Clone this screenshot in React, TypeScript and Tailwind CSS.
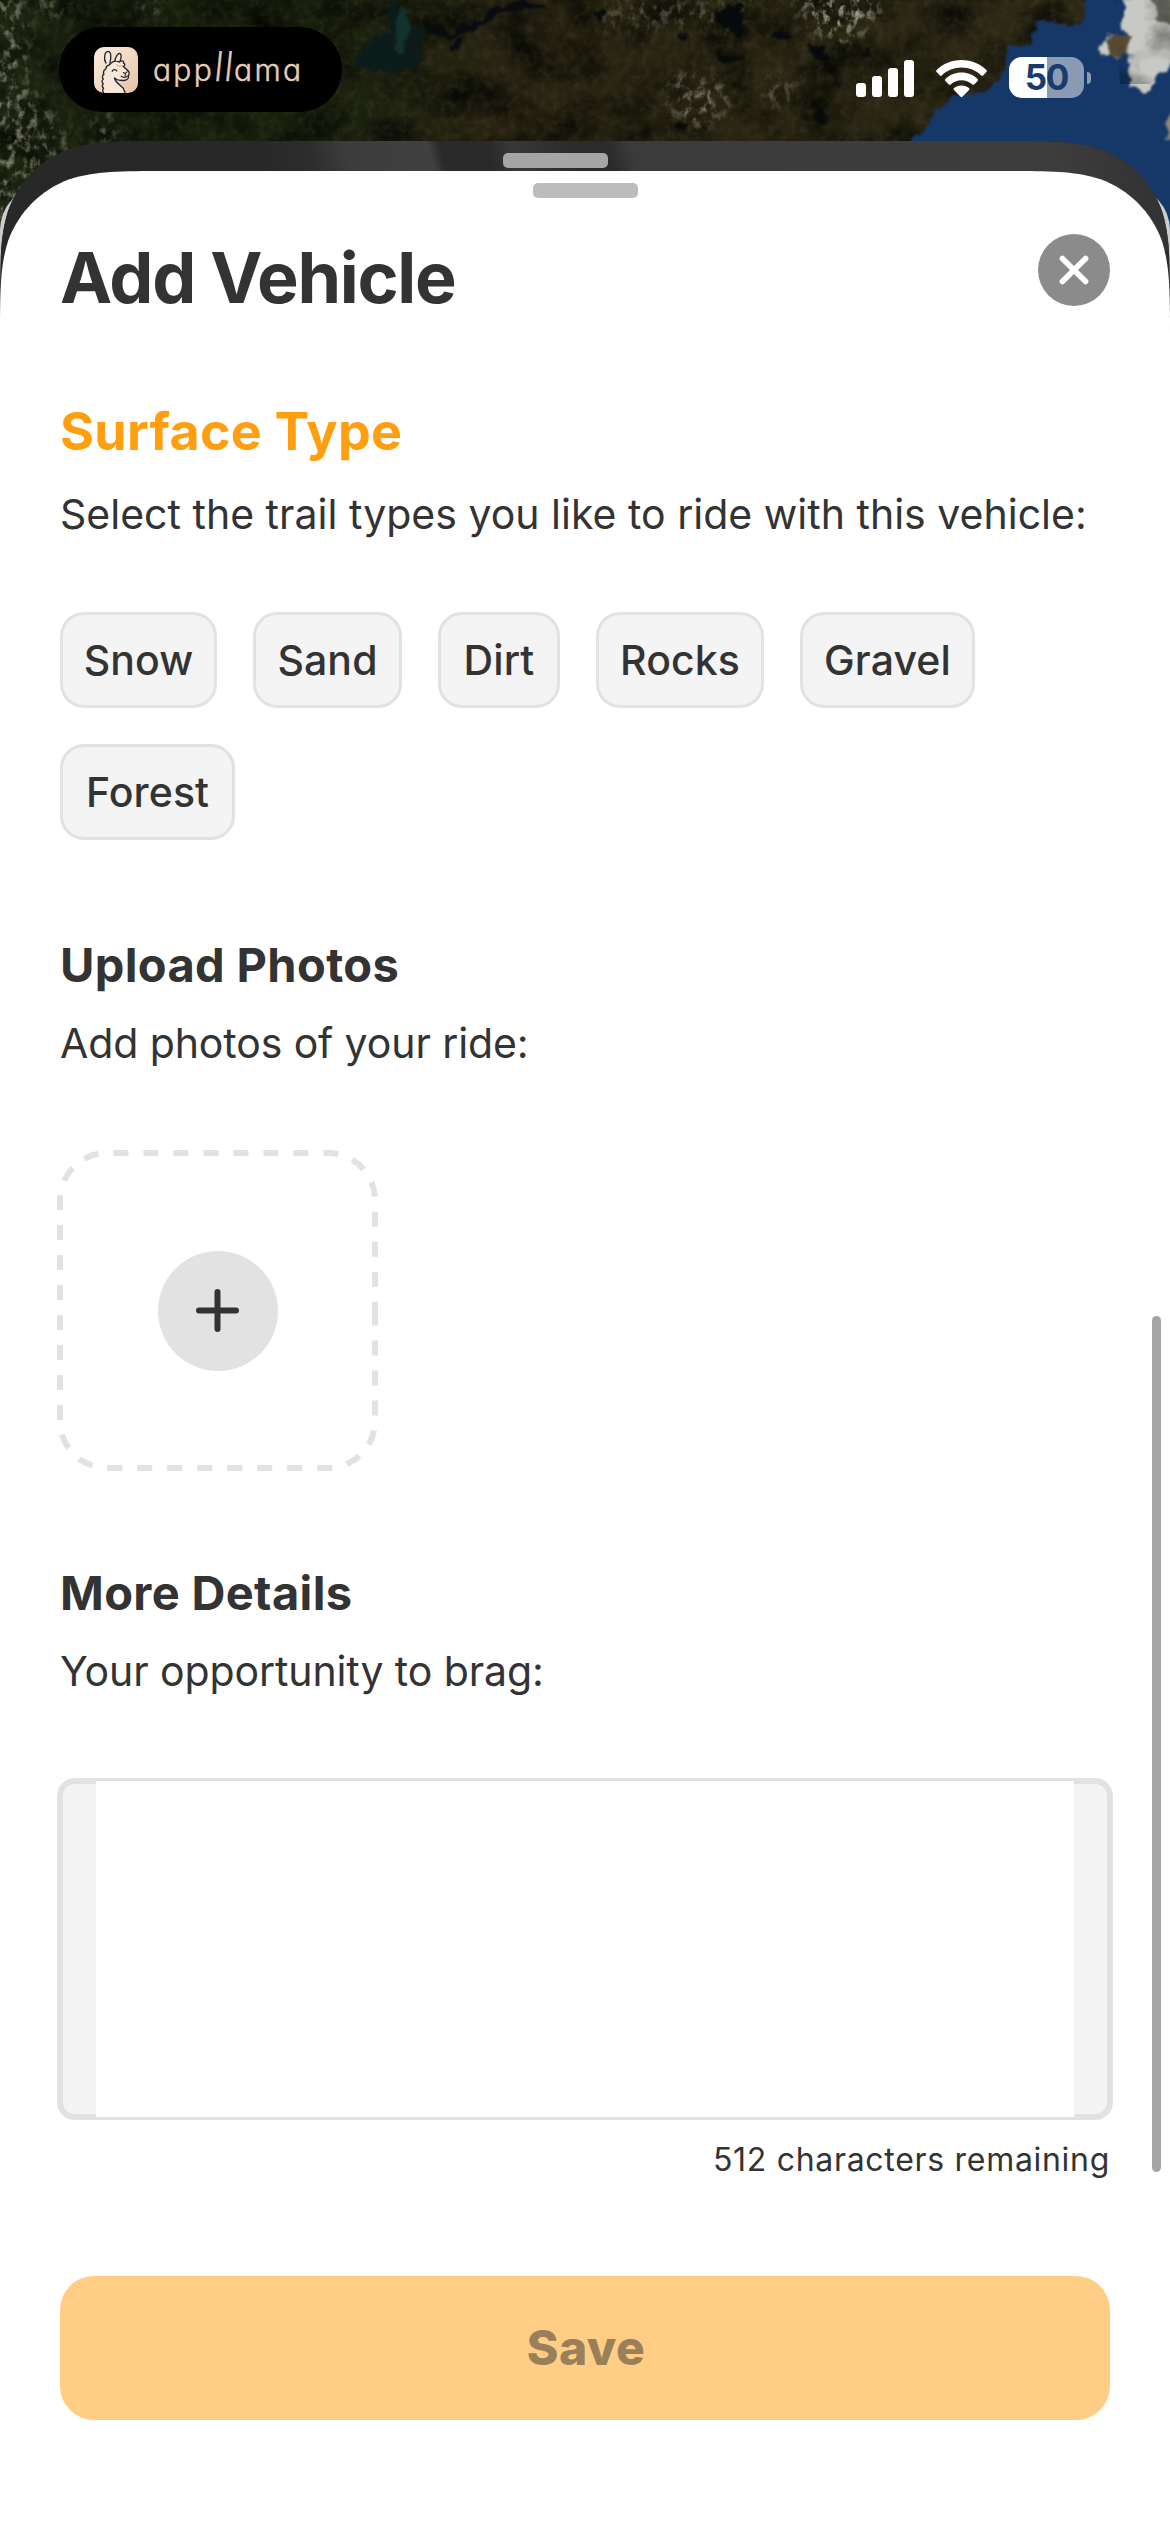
import type { ReactNode } from 'react';

const surfaces = [
  { name: 'Snow', width: 'w-[157px]' },
  { name: 'Sand', width: 'w-[149px]' },
  { name: 'Dirt', width: 'w-[122px]' },
  { name: 'Rocks', width: 'w-[168px]' },
  { name: 'Gravel', width: 'w-[175px]' },
  { name: 'Forest', width: 'w-[175px]' },
];

/* Satellite map strip that stays visible above the sheets. */
function SatelliteMap() {
  return (
    <svg className="absolute left-0 top-0 h-[300px] w-[1170px]" viewBox="0 0 1170 300" aria-hidden="true">
      <defs>
        <linearGradient id="land" x1="0" x2="1" y1="0" y2="0.05">
          <stop offset="0" stopColor="#1b2210" />
          <stop offset="0.16" stopColor="#141e0b" />
          <stop offset="0.33" stopColor="#1b210e" />
          <stop offset="0.45" stopColor="#292312" />
          <stop offset="0.6" stopColor="#272311" />
          <stop offset="1" stopColor="#2e2a17" />
        </linearGradient>
        <filter id="mottle" x="0" y="0" width="100%" height="100%" colorInterpolationFilters="sRGB">
          <feTurbulence type="fractalNoise" baseFrequency="0.02 0.025" numOctaves="6" seed="7" />
          <feColorMatrix values="0 0 0 0 0.02  0 0 0 0 0.03  0 0 0 0 0.01  0 2 0 0 -0.78" />
        </filter>
        <filter id="grain" x="0" y="0" width="100%" height="100%" colorInterpolationFilters="sRGB">
          <feTurbulence type="fractalNoise" baseFrequency="0.12" numOctaves="4" seed="3" />
          <feColorMatrix values="0 0 0 0 0.34  0 0 0 0 0.31  0 0 0 0 0.2  0 0 1.6 0 -0.66" />
        </filter>
        <filter id="snow" x="0" y="0" width="100%" height="100%" colorInterpolationFilters="sRGB">
          <feTurbulence type="fractalNoise" baseFrequency="0.13 0.1" numOctaves="4" seed="12" />
          <feColorMatrix values="0 0 0 0 0.62  0 0 0 0 0.63  0 0 0 0 0.56  3.6 0 0 0 -1.75" />
        </filter>
        <filter id="rough" x="-10%" y="-10%" width="120%" height="120%" colorInterpolationFilters="sRGB">
          <feTurbulence type="fractalNoise" baseFrequency="0.07" numOctaves="3" seed="4" result="n" />
          <feDisplacementMap in="SourceGraphic" in2="n" scale="14" xChannelSelector="R" yChannelSelector="G" />
          <feGaussianBlur stdDeviation="1.3" />
        </filter>
        <filter id="lakes" x="-10%" y="-50%" width="120%" height="200%" colorInterpolationFilters="sRGB">
          <feTurbulence type="fractalNoise" baseFrequency="0.1" numOctaves="3" seed="9" result="n" />
          <feDisplacementMap in="SourceGraphic" in2="n" scale="12" xChannelSelector="R" yChannelSelector="G" />
          <feGaussianBlur stdDeviation="1" />
        </filter>
        <filter id="soft">
          <feGaussianBlur stdDeviation="9" />
        </filter>
        <mask id="snowMask">
          <g filter="url(#soft)" fill="#fff">
            <path d="M-20 -10H22L30 90L70 140L55 170L40 250H-20Z" fill="#aaa" />
            <path d="M30 -10H75L70 12L45 20Z" fill="#888" />
            <path d="M94 108L114 118L114 145L94 142Z" fill="#aaa" />
            <path d="M140 -10H160V18H142Z" fill="#999" />
            <path d="M600 0H760L740 30L700 25L640 30L600 30Z" fill="#666" />
            <path d="M795 -10H875L877 22L840 45L807 22Z" />
            <path d="M670 75L725 80L730 110L690 130L665 100Z" fill="#aaa" />
            <path d="M770 80L798 82L790 102H762Z" fill="#aaa" />
          </g>
        </mask>
        <clipPath id="island">
          <path d="M1114 -4H1180V60L1150 84L1120 84Z" />
        </clipPath>
      </defs>
      <rect width="1170" height="300" fill="url(#land)" />
      <rect width="1170" height="300" filter="url(#mottle)" />
      <rect width="1170" height="300" filter="url(#grain)" opacity="0.35" />
      <g filter="url(#rough)">
        <path d="M388 -4L404 14L424 30L420 56L414 70L384 72L356 68L358 56L372 40L390 34Z" fill="#0c1c1b" />
        <path d="M400 4L410 20L404 52L394 50Z" fill="#12332b" />
        <path d="M432 30L452 34L476 26L498 10L522 4L546 6" fill="none" stroke="#080b10" strokeWidth="6" />
        <path d="M450 50L462 38" stroke="#080b10" strokeWidth="5" />
      </g>
      <rect width="1170" height="300" filter="url(#snow)" mask="url(#snowMask)" />
      <g filter="url(#lakes)" fill="#070a0d">
        <path d="M716 14L728 4L742 4L744 24L738 40L730 28L718 24Z" />
        <path d="M772 38L784 26L792 38Z" />
        <path d="M806 44L826 44L828 64L814 58Z" />
        <path d="M716 50L726 56L742 56L738 62L718 62Z" />
        <path d="M681 34L686 41M818 104L821 124M868 48L864 56M676 128L684 122M598 12L602 20" stroke="#070a0d" strokeWidth="7" />
      </g>
      <g filter="url(#rough)">
        <path d="M1090 -10L1082 26L1036 22L1028 46L1006 48L1004 72L996 86L954 94L932 118L910 142V310H1190V-10Z" fill="#163869" />
        <path d="M1122 -10L1122 26L1130 42L1106 36L1098 54L1116 56L1128 50L1130 88L1142 90L1160 74L1180 60V-10Z" fill="#c8c9c5" />
        <path d="M1106 38L1130 36L1128 52L1110 56Z" fill="#574a33" />
        <path d="M1152 -6L1180 -4L1180 24L1160 20Z" fill="#6a6b60" />
        <path d="M1168 116L1180 110V146L1166 136Z" fill="#8b8a7c" />
      </g>
      <g clipPath="url(#island)">
        <rect width="1170" height="300" filter="url(#mottle)" opacity="0.45" />
      </g>
    </svg>
  );
}

function LlamaIcon() {
  return (
    <svg className="h-[46px] w-[44px]" viewBox="161 108 133 137" preserveAspectRatio="none" aria-hidden="true">
      <defs>
        <linearGradient id="tile" x1="0" x2="1" y1="0" y2="1">
          <stop offset="0" stopColor="#fbeee2" />
          <stop offset="1" stopColor="#e6c3a5" />
        </linearGradient>
      </defs>
      <rect x="161" y="108" width="133" height="137" rx="30" fill="url(#tile)" />
      <g stroke="#20242b" strokeWidth="4" strokeLinecap="round" strokeLinejoin="round">
        <path
          d="M190 244C186 238 187 234 190 231C185 226 185 221 189 218C184 213 184 207 189 204C185 198 186 192 191 189C188 182 191 176 197 173C197 167 201 163 206 162L212 157C218 149 232 148 238 153C244 146 252 150 250 156C256 158 255 164 249 166C255 171 266 178 267 184C268 190 264 194 265 198C265 206 254 209 245 207C237 208 229 206 223 200C224 213 240 221 249 230L255 244"
          fill="#f8e7d8"
        />
        <path d="M197 156C189 142 193 122 204 121C214 122 213 142 209 156" fill="#f8e7d8" />
        <path d="M224 149C226 137 233 127 239 127C244 130 243 141 240 149" fill="#f8e7d8" />
        <path d="M216 180C219 174 227 174 230 179" fill="none" />
        <path d="M250 184C254 188 259 186 261 182M256 188L255 194M243 195C248 200 258 200 262 194" fill="none" strokeWidth="3.4" />
      </g>
      <path d="M228 161C234 166 244 166 249 163" fill="none" stroke="#dfb48d" strokeWidth="4" />
    </svg>
  );
}

function StatusBar() {
  return (
    <header className="relative flex h-[141px] items-start justify-between pl-[59px] pr-[79px] pt-[27px]">
      <div className="flex h-[85px] w-[283px] items-center rounded-full bg-black pl-[35px]">
        <LlamaIcon />
        <div className="ml-[15px] whitespace-nowrap text-[30px] font-light leading-[46px] tracking-[2.3px] text-[#e3cdbb] [-webkit-text-stroke:0.5px_#e3cdbb] [font-feature-settings:'cv11']">
          app
          <span className="inline-block tracking-[3px] [transform-origin:50%_73%] [transform:skewX(-6deg)_scaleY(1.36)]">ll</span>
          ama
        </div>
      </div>
      <div className="flex items-center pt-[30px]">
        <div className="mt-[2px] flex h-[37px] items-end gap-[6px]">
          <i className="h-[14px] w-[10px] rounded-[3px] bg-white" />
          <i className="h-[21px] w-[10px] rounded-[3px] bg-white" />
          <i className="h-[29px] w-[10px] rounded-[3px] bg-white" />
          <i className="h-[37px] w-[10px] rounded-[3px] bg-white" />
        </div>
        <svg className="ml-[22px] mt-[2px] h-[38px] w-[51px]" viewBox="0 0 51 38" fill="#fff" aria-hidden="true">
          <path d="M25.5 0C35.2 0 44 3.8 50.4 10C51 10.6 51 11.4 50.4 12L47.1 15.4C46.6 15.9 45.8 15.9 45.2 15.4C40 10.5 33.1 7.6 25.5 7.6S11 10.5 5.8 15.4C5.2 15.9 4.4 15.9 3.9 15.4L.6 12C0 11.4 0 10.6.6 10C7 3.8 15.8 0 25.5 0Z" />
          <path d="M25.5 12.6C31.8 12.6 37.4 15 41.6 19C42.2 19.6 42.2 20.4 41.6 21L38.2 24.4C37.6 25 36.9 25 36.3 24.5C33.5 21.8 29.7 20.2 25.5 20.2S17.5 21.8 14.7 24.5C14.1 25 13.4 25 12.8 24.4L9.4 21C8.8 20.4 8.8 19.6 9.4 19C13.6 15 19.2 12.6 25.5 12.6Z" />
          <path d="M25.5 25.4C28.4 25.4 31 26.4 33 28.1C33.6 28.7 33.6 29.4 33 30L26.6 36.6C26 37.3 25 37.3 24.4 36.6L18 30C17.4 29.4 17.4 28.7 18 28.1C20 26.4 22.6 25.4 25.5 25.4Z" />
        </svg>
        <div className="ml-[22px] flex h-[41px] w-[75px] items-center justify-center rounded-[13px] bg-[linear-gradient(90deg,#fff_0_38px,#8b9bb4_38px)] text-[35px] font-bold leading-[41px] tracking-[-1.2px] text-[#1a3b6d]">
          50
        </div>
        <i className="ml-[3px] h-[12px] w-[4px] rounded-r-full bg-[#8b9bb4]" />
      </div>
    </header>
  );
}

function Title({ children }: { children: ReactNode }) {
  return <h2 className="text-[47px] font-bold leading-[56px] tracking-[0.35px]">{children}</h2>;
}

function Hint({ children }: { children: ReactNode }) {
  return <p className="mt-[25px] whitespace-nowrap text-[41px] leading-[50px] tracking-[-0.1px]">{children}</p>;
}

function PhotoPicker() {
  return (
    <button className="-ml-[3px] mt-[82px] grid h-[321px] w-[321px] place-items-center">
      <svg className="col-start-1 row-start-1 h-[321px] w-[321px]" viewBox="57 1150 321 321" fill="none" aria-hidden="true">
        <path
          d="M375 1310.5V1421A47 47 0 0 1 328 1468H107A47 47 0 0 1 60 1421V1200A47 47 0 0 1 107 1153H328A47 47 0 0 1 375 1200Z"
          stroke="#e2e2e2"
          strokeWidth="6"
          strokeDasharray="15 15"
        />
      </svg>
      <span className="col-start-1 row-start-1 grid size-[120px] place-items-center rounded-full bg-[#e2e2e2]">
        <svg className="size-[43px]" viewBox="0 0 43 43" stroke="#333" strokeWidth="6" strokeLinecap="round" aria-hidden="true">
          <path d="M21.5 3V40M3 21.5H40" />
        </svg>
      </span>
    </button>
  );
}

export default function App() {
  return (
    <div className="relative h-[2532px] w-[1170px] overflow-hidden bg-white font-['Inter',sans-serif] text-[#333]">
      <SatelliteMap />
      <div className="absolute left-0 top-[186px] h-[400px] w-[1170px] rounded-t-[44px] bg-[#cdcdcd]" />
      <StatusBar />
      <div className="relative h-[2391px] bg-[linear-gradient(75deg,#282828_0_24%,#2d2d2d_28%,#3c3c3c_31%,#404040_38%,#2a2a2a_39%,#2a2a2a_43%,#383838_45%,#2b2b2b_50%,#2b2b2b_53%,#3b3b3b_55%,#3d3d3d_90%,#303030_100%)] bg-[length:100%_110px] bg-[#2a2a2a] bg-no-repeat pt-[12px] [clip-path:path('M0_168.2C0_119.7_0_95.5_8.2_69.5C18.6_41_41_18.6_69.5_8.2C95.5_0_119.7_0_168.2_0H1001.8C1050.3_0_1074.5_0_1100.5_8.2C1129_18.6_1151.4_41_1161.8_69.5C1170_95.5_1170_119.7_1170_168.2V2391H0Z')]">
        <div className="ml-[503px] h-[15px] w-[105px] rounded-[5px] bg-[#a5a5a5]" />
        <main className="relative mt-[3px] h-[2361px] bg-white px-[60px] pt-[12px] [clip-path:path('M0_168.2C0_119.7_0_95.5_8.2_69.5C18.6_41_41_18.6_69.5_8.2C95.5_0_119.7_0_168.2_0H1001.8C1050.3_0_1074.5_0_1100.5_8.2C1129_18.6_1151.4_41_1161.8_69.5C1170_95.5_1170_119.7_1170_168.2V2361H0Z')]">
          <div className="ml-[473px] h-[15px] w-[105px] rounded-[5px] bg-[#bcbcbc]" />
          <div className="mt-[36px] flex items-start justify-between">
            <h1 className="pt-[2px] text-[70px] font-bold leading-[84px] tracking-[-1.29px]">Add Vehicle</h1>
            <button className="grid size-[72px] place-items-center rounded-full bg-[#8b8b8b]">
              <svg className="size-[30px]" viewBox="0 0 30 30" stroke="#fff" strokeWidth="5.6" strokeLinecap="round" aria-hidden="true">
                <path d="M3.4 3.4L26.6 26.6M26.6 3.4L3.4 26.6" />
              </svg>
            </button>
          </div>

          <section className="mt-[82px]">
            <h2 className="text-[52px] font-bold leading-[60px] tracking-[0.28px] text-[#ff9f0f]">Surface Type</h2>
            <p className="mt-[27px] whitespace-nowrap text-[41px] leading-[50px] tracking-[0.01px]">
              Select the trail types you like to ride with this vehicle:
            </p>
            <div className="mt-[73px] flex flex-wrap gap-[36px]">
              {surfaces.map(({ name, width }) => (
                <button
                  key={name}
                  className={`h-[96px] rounded-[24px] border-3 border-[#e2e2e2] bg-[#f4f4f4] text-center text-[41px] font-medium leading-[90px] tracking-[0.1px] ${width}`}
                >
                  {name}
                </button>
              ))}
            </div>
          </section>

          <section className="mt-[97px]">
            <Title>Upload Photos</Title>
            <Hint>Add photos of your ride:</Hint>
            <PhotoPicker />
          </section>

          <section className="mt-[94px]">
            <Title>More Details</Title>
            <Hint>Your opportunity to brag:</Hint>
            <div className="-mx-[3px] mt-[82px] h-[342px] rounded-[18px] border-6 border-[#e2e2e2] bg-[#f4f4f4] px-[33px]">
              <div className="-mt-[3px] h-[336px] bg-white" />
            </div>
            <p className="mt-[20px] text-right text-[32px] leading-[40px] tracking-[0.7px]">512 characters remaining</p>
          </section>

          <button className="mt-[96px] h-[144px] w-full rounded-[34px] bg-[#ffce84] pl-[2px] text-[48px] font-extrabold leading-[144px] tracking-[0.5px] text-[#9a805a]">
            Save
          </button>

          <div className="absolute right-[9px] top-[1145px] h-[856px] w-[9px] rounded-full bg-[#a5a5a5]" />
        </main>
      </div>
    </div>
  );
}
